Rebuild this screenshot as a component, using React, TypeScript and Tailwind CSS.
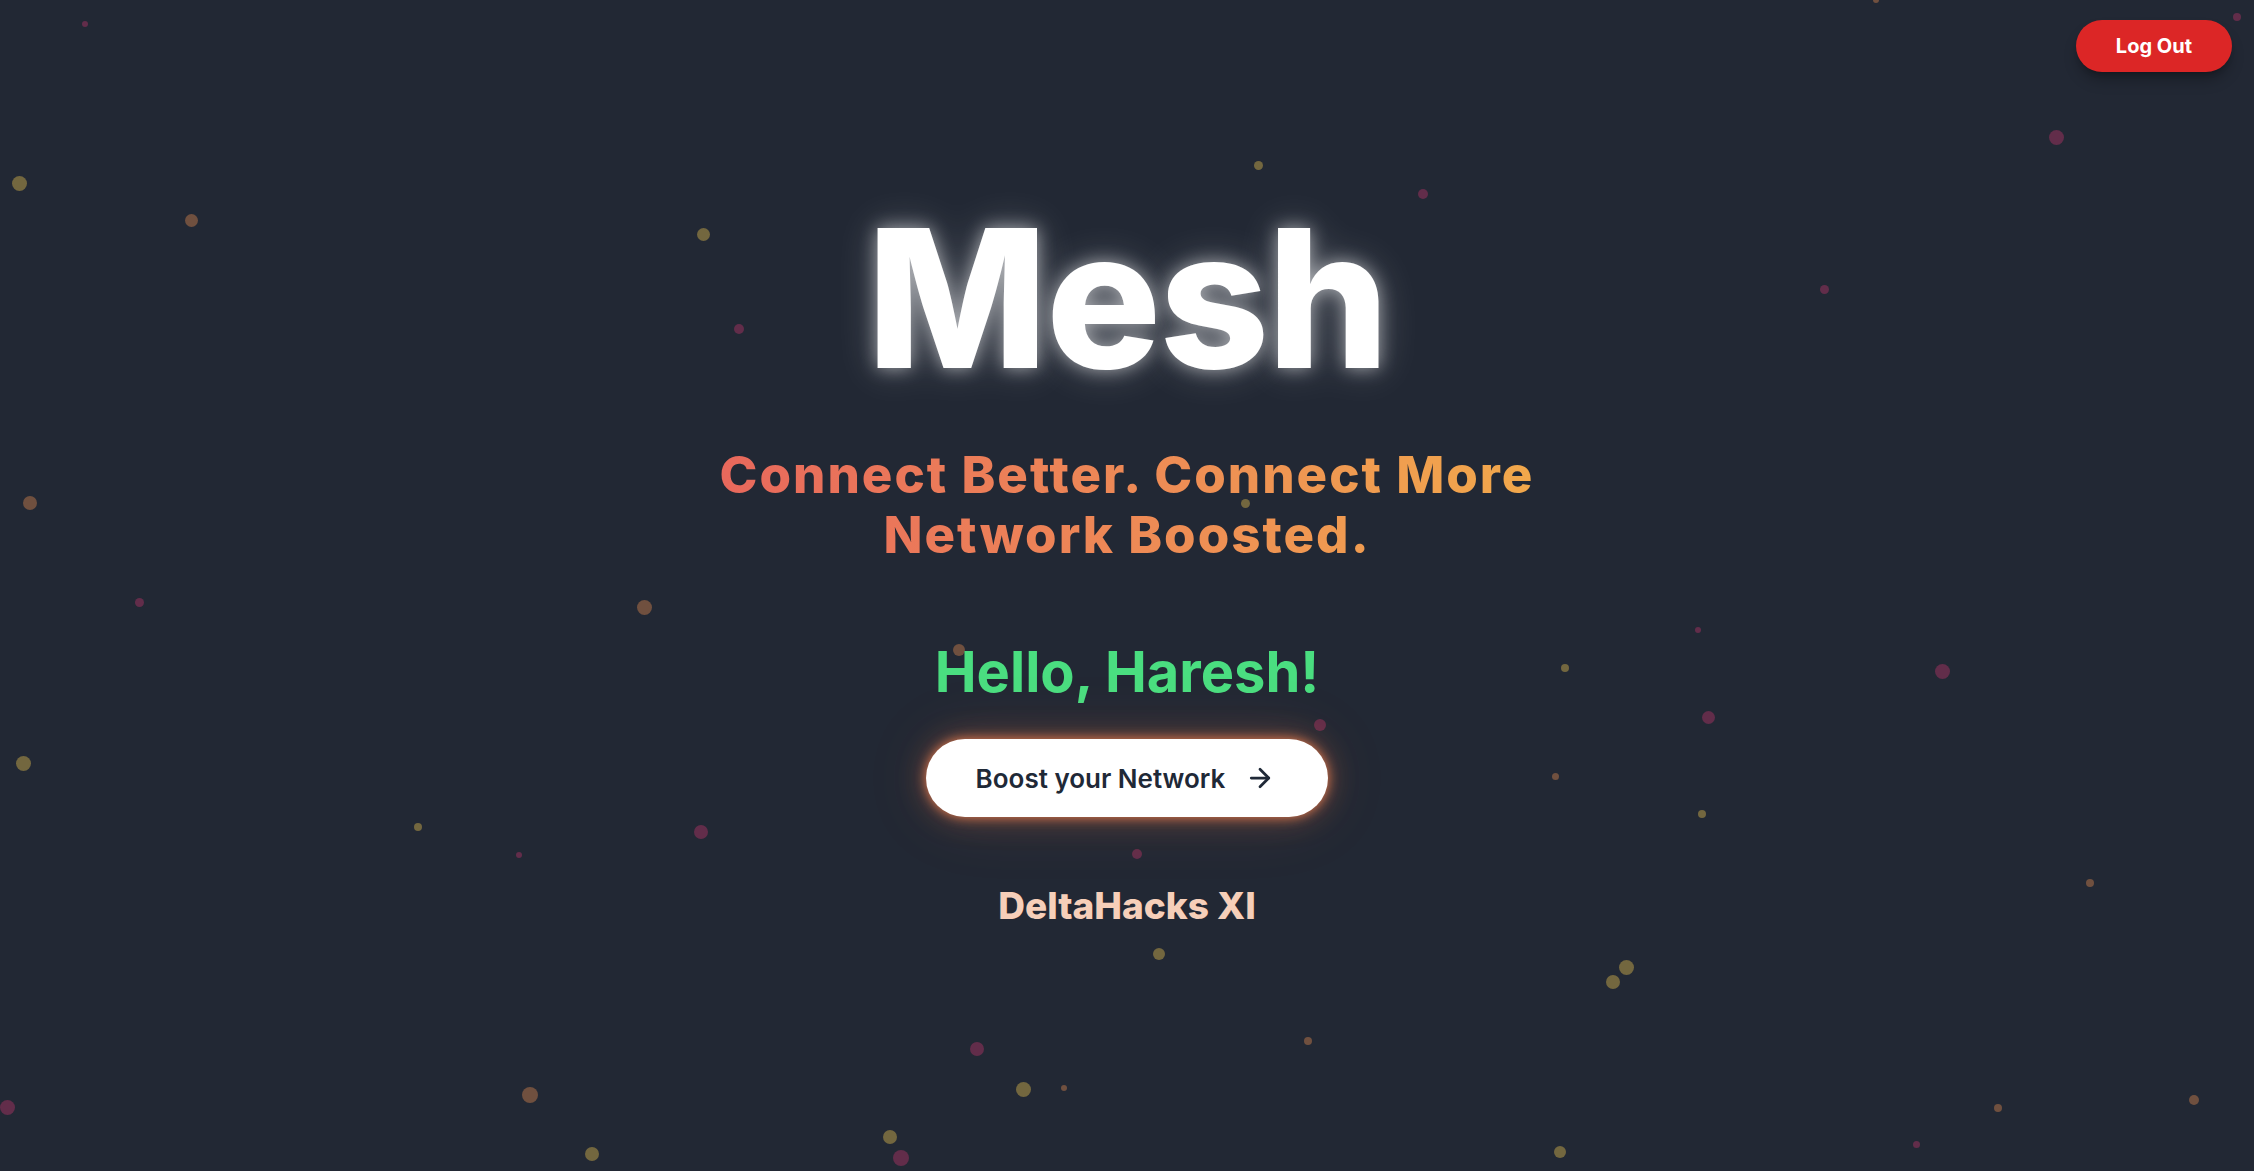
import React from 'react'
import { ArrowRight } from 'lucide-react'

// background particles: x, y, diameter, tone
const dots: [number, number, number, 'y' | 'b' | 'p'][] = [
  [85, 24, 6, 'p'], [19, 183, 15, 'y'], [191, 220, 13, 'b'], [703, 234, 13, 'y'],
  [739, 329, 10, 'p'], [1258, 165, 9, 'y'], [1423, 194, 10, 'p'], [2056, 137, 15, 'p'],
  [1824, 289, 9, 'p'], [30, 503, 14, 'b'], [139, 602, 9, 'p'], [644, 607, 15, 'b'],
  [1245, 503, 9, 'y'], [1698, 630, 6, 'p'], [1565, 668, 8, 'y'], [1942, 671, 15, 'p'],
  [1708, 717, 13, 'p'], [1320, 725, 12, 'p'], [959, 650, 12, 'b'], [23, 763, 15, 'y'],
  [1555, 776, 7, 'b'], [1702, 814, 8, 'y'], [418, 827, 8, 'y'], [701, 832, 14, 'p'],
  [519, 855, 6, 'p'], [1137, 854, 10, 'p'], [2090, 883, 8, 'b'], [1626, 967, 15, 'y'],
  [1613, 982, 14, 'y'], [1159, 954, 12, 'y'], [1308, 1041, 8, 'b'], [977, 1049, 14, 'p'],
  [1023, 1089, 15, 'y'], [1064, 1088, 6, 'b'], [530, 1095, 16, 'b'], [7, 1107, 15, 'p'],
  [1998, 1108, 8, 'b'], [2194, 1100, 10, 'b'], [592, 1154, 14, 'y'], [890, 1137, 14, 'y'],
  [901, 1158, 16, 'p'], [1560, 1152, 12, 'y'], [1916, 1144, 7, 'p'], [2237, 17, 8, 'p'],
  [1876, 0, 6, 'b'],
]

const tone = {
  y: 'bg-[#73673f]',
  b: 'bg-[#70503f]',
  p: 'bg-[#622d4a]',
}

const App = () => {
  return (
    <div className="relative h-[1171px] w-full overflow-hidden bg-[#222834] font-['Inter',sans-serif]">
      {/* particles */}
      {dots.map(([x, y, d, t], i) => (
        <span
          key={i}
          className={`absolute rounded-full ${tone[t]}`}
          style={{ left: x - d / 2, top: y - d / 2, width: d, height: d }}
        />
      ))}

      <button className="absolute top-5 right-[22px] rounded-full bg-[#dc2626] px-10 py-3 text-xl leading-7 font-bold text-white shadow-lg shadow-black/30">
        Log Out
      </button>

      <main className="relative flex flex-col items-center pt-[202px]">
        <h1 className="text-[192px] leading-none font-extrabold tracking-[-2px] text-white [text-shadow:0_0_18px_rgba(255,255,255,0.55),0_0_40px_rgba(255,255,255,0.25)]">
          Mesh
        </h1>

        <h2 className="mt-[51px] w-fit bg-linear-to-r from-[#e8685c] to-[#f1a84b] bg-clip-text text-center text-[51px] leading-[60px] font-extrabold tracking-[2px] text-transparent">
          Connect Better. Connect More
          <br />
          Network Boosted.
        </h2>

        <p className="mt-[79px] text-[56px] leading-none font-bold text-[#4ade80]">
          Hello, Haresh!
        </p>

        <button className="mt-[39px] flex h-[78px] items-center gap-[20px] rounded-full bg-white pr-[53px] pl-[50px] text-[26px] font-semibold text-[#1f2937] [box-shadow:0_0_12px_rgba(245,130,80,0.9),0_0_30px_rgba(245,130,80,0.35),0_0_70px_rgba(245,130,80,0.12)]">
          Boost your Network
          <ArrowRight size={30} strokeWidth={2.2} />
        </button>

        <p className="mt-[70px] text-[37px] leading-none font-extrabold text-[#f6cfb9]">
          DeltaHacks XI
        </p>
      </main>
    </div>
  )
}

export default App
